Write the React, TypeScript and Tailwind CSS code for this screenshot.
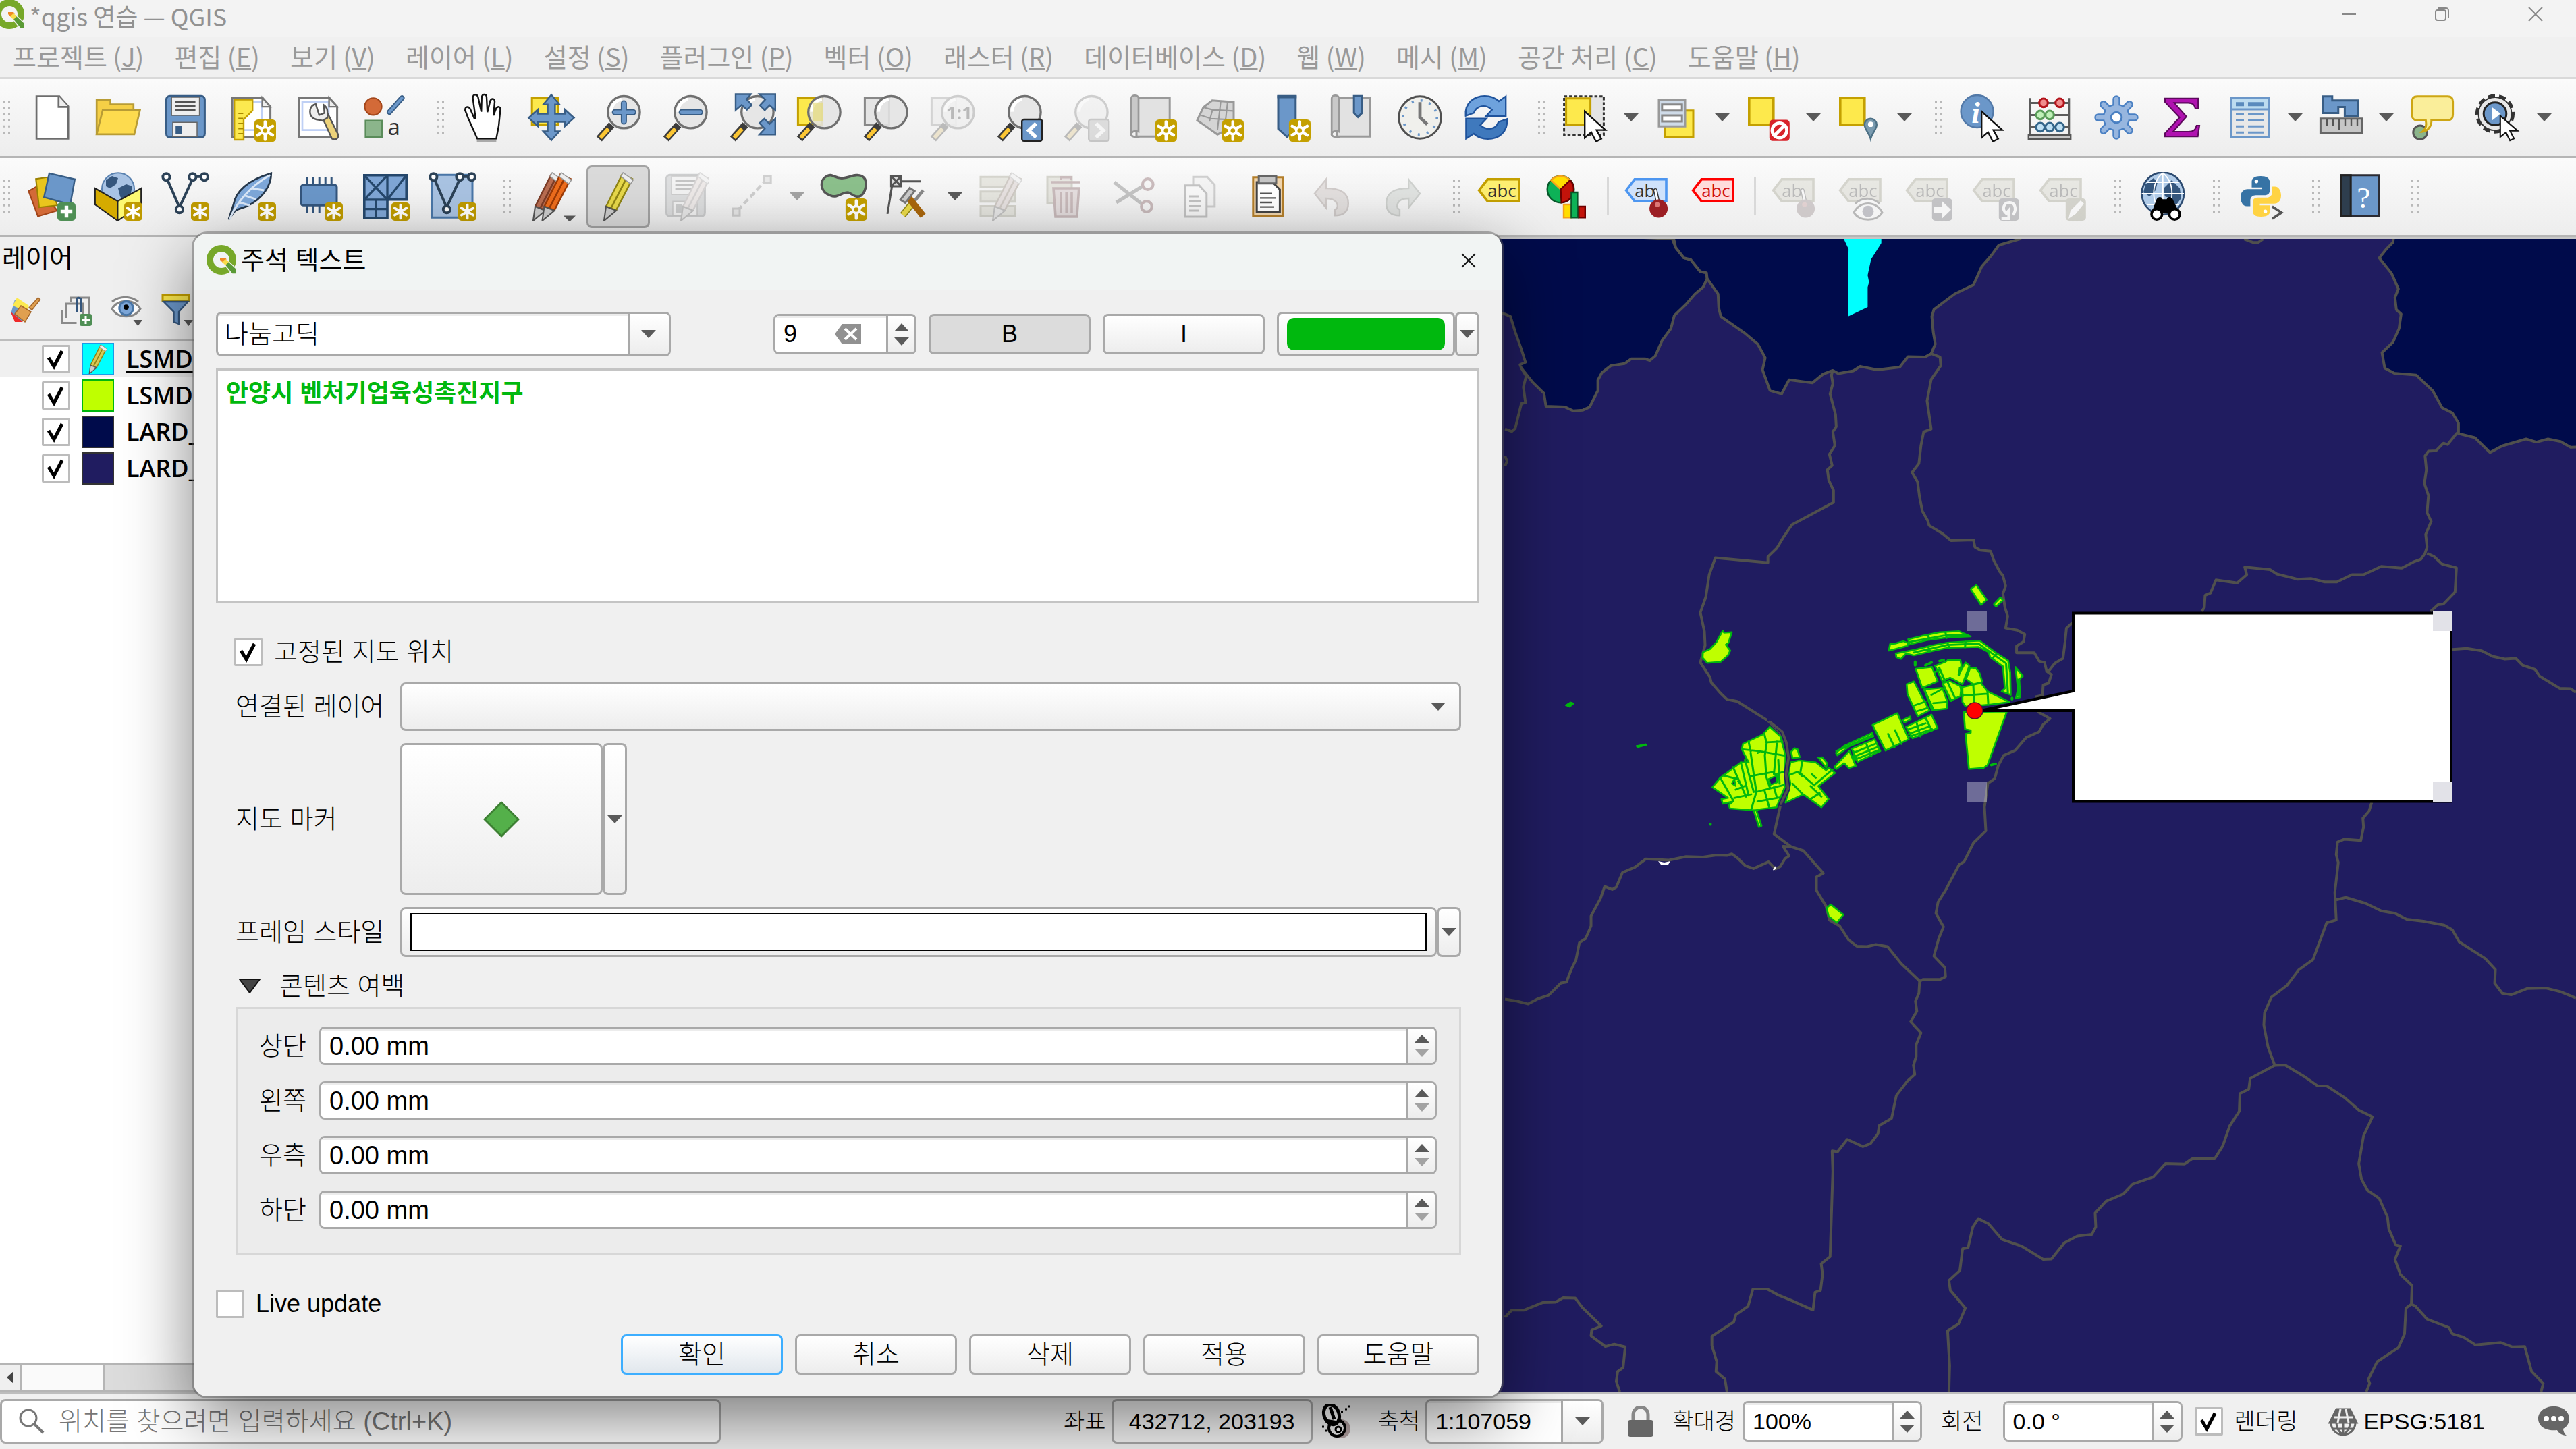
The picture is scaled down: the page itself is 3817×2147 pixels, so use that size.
import type { ReactNode } from "react";
import { clsx } from "clsx";

const control = "rounded-[8px] border-[3px] border-[#a9a9a9]";
const raised = "bg-linear-to-b from-white to-[#ededed]";

/* ---------- icon parts ---------- */

function Icon({ children, faded }: { children: ReactNode; faded?: boolean }) {
  return (
    <svg viewBox="0 0 24 24" className={clsx("size-[72px] shrink-0", faded && "opacity-30 saturate-50")} aria-hidden="true">
      {children}
    </svg>
  );
}

function NewBadge({ small }: { small?: boolean }) {
  if (small) {
    return (
      <g>
        <rect x="15" y="15" width="9" height="9" rx="1.6" fill="#bf9b00" />
        <path d="M19.5 16.2v6.6M16.6 17.8l5.8 3.4M22.4 17.8l-5.8 3.4" stroke="#fff" strokeWidth="1.3" strokeLinecap="round" />
      </g>
    );
  }
  return (
    <g>
      <rect x="13.3" y="13" width="10.7" height="11" rx="1.8" fill="#c4a000" />
      <path d="M18.6 14.2v8.6M14.9 16.3l7.4 4.4M22.3 16.3l-7.4 4.4" stroke="#fff" strokeWidth="1.5" strokeLinecap="round" />
      <circle cx="18.6" cy="18.5" r="2.3" fill="#fff" />
      <circle cx="18.6" cy="18.5" r="1.1" fill="#c4a000" />
    </g>
  );
}

function Lens({ children }: { children?: ReactNode }) {
  return (
    <g>
      <path d="M8.8 15.6 2.6 22.6" stroke="#3c3c3c" strokeWidth="3.6" />
      <path d="M7.2 17.6 3.2 22" stroke="#fcc633" strokeWidth="2" />
      <circle cx="14.8" cy="9.4" r="7.9" fill="#e4e4e4" fillOpacity=".88" stroke="#707070" strokeWidth="1.1" />
      <path d="M8.6 9.2a6 6 0 0 1 5-6.2" stroke="#fff" strokeWidth="1.6" fill="none" />
      {children}
    </g>
  );
}

function Cursor() {
  return <path d="M10.6 8.8v13l3.2-2.7 2.4 4.6 2.6-1.4-2.4-4.3h4.4z" transform="translate(.8 .2)" fill="#fff" stroke="#111" strokeWidth=".8" />;
}

function Tag({ label = "abc", fill = "#fdef72", stroke = "#c4a000", ink = "#333" }) {
  return (
    <g>
      <path d="M1.2 9 5.4 3.6H21v10.8H5.4z" fill={fill} stroke={stroke} strokeWidth="1.2" />
      <text x="5.4" y="12.2" fontSize="8.6" fill={ink} fontFamily="Open Sans, sans-serif">{label}</text>
    </g>
  );
}

function Pin({ color = "#9c1f24" }) {
  return (
    <g>
      <path d="M16.8 14.5 15.6 9" stroke="#333" strokeWidth="2" strokeLinecap="round" />
      <path d="M16.8 14.5 15.6 9" stroke="#fff" strokeWidth="1.1" strokeLinecap="round" />
      <circle cx="17.2" cy="18" r="4.5" fill={color} />
      <circle cx="16.6" cy="16" r="1.2" fill="#d77" />
    </g>
  );
}

function Page() {
  return (
    <g>
      <path d="M2.4 2.2h14.8l4 4.5v14.9H2.4z" fill="#fff" stroke="#777" strokeWidth="1" />
      <path d="M4 4.4h13v13.8H4z" fill="none" stroke="#bfd0f5" strokeWidth=".9" />
      <path d="M17.2 2.2v4.5h4z" fill="#eee" stroke="#777" strokeWidth=".8" />
    </g>
  );
}

function Scroll() {
  return (
    <g>
      <path d="M4 2.4h16.4v19H4z" fill="#e2e2e2" stroke="#999" strokeWidth="1" />
      <path d="M1.4 2.6c0-2 3.6-2 3.6 0V19c-2-.7-3.6 0-3.6 1.5z" fill="#c9c9c9" stroke="#999" strokeWidth=".9" />
      <path d="M1.4 20.3c0 1.5 3.6 1.5 4 1" stroke="#999" fill="none" />
    </g>
  );
}

function Pencil({ color = "#e7d84a", dark = "#8f8415", x = 0 }) {
  return (
    <g transform={`translate(${x} 0)`}>
      <path d="M6 17 14 1l5 2.4-8 15.4z" fill={color} stroke={dark} strokeWidth=".8" />
      <path d="M8.4 18 16.5 2.2" stroke={dark} strokeWidth=".9" />
      <path d="m13.4 2.2 1-1.9 5 3.6-1.3 2z" fill="#eee" stroke="#999" strokeWidth=".5" />
      <path d="m6 17 5 2-6 5z" fill="#ccc" stroke="#555" strokeWidth=".7" />
    </g>
  );
}

function YellowSquare() {
  return <path d="M2.6 2.4h12v13.2h-12z" fill="#fde94c" stroke="#c4a000" strokeWidth="1.2" />;
}

function Floppy({ body = "#6b97c9", edge = "#385d85" }) {
  return (
    <g>
      <rect x="2.8" y="1.4" width="19" height="20.4" rx="1.8" fill={body} stroke={edge} strokeWidth="1" />
      <path d="M5.4 2h13.8v9H5.4z" fill="#eee" stroke="#666" strokeWidth=".5" />
      <path d="M7.2 4.4h10M7.2 6.4h10M7.2 8.4h10" stroke="#555" strokeWidth=".9" />
      <path d="M6 14.4h12v7H6z" fill="#eee" stroke="#666" strokeWidth=".5" />
      <path d="M7.4 16h3v4h-3z" fill={edge} />
    </g>
  );
}

function Polyline() {
  return (
    <g stroke="#2c4257" strokeWidth="1.3" fill="none">
      <path d="M3.4 3.8 9.3 17.4 15.6 3.8M17.6 2.3h3" />
      <circle cx="2.8" cy="2.4" r="1.7" fill="#fff" />
      <circle cx="9.3" cy="18.4" r="1.7" fill="#fff" />
      <circle cx="15.8" cy="2.4" r="1.7" fill="#fff" />
      <circle cx="21.6" cy="2.4" r="1.7" fill="#fff" />
    </g>
  );
}

function Down({ dim }: { dim?: boolean }) {
  return <span className={clsx("block text-center border-x-[11px] border-t-[12px] border-x-transparent", dim ? "border-t-[#a3a3a3]" : "border-t-[#5a5a5a]")} />;
}

function Up() {
  return <span className="block border-x-[11px] border-b-[12px] border-x-transparent border-b-[#5a5a5a]" />;
}

/* ---------- toolbar icons ---------- */

const icons: Record<string, ReactNode> = {
  "New Project": (
    <Icon>
      <path d="M4.7 1.5h11.3l4.4 5v16H4.7z" fill="#fff" stroke="#6d6d6d" strokeWidth=".9" />
      <path d="M15.6 1.5v5.3h4.8" fill="#eee" stroke="#6d6d6d" strokeWidth=".9" />
    </Icon>
  ),
  "Open Project": (
    <Icon>
      <path d="M1.4 20.3V3.4h6.8v2.1h11.4v4" fill="#f5cf46" stroke="#b89c35" strokeWidth=".9" />
      <path d="M1.4 20.3 4.4 8.4h18.4l-2.8 11.9z" fill="#fddb4e" stroke="#b89c35" strokeWidth=".9" />
    </Icon>
  ),
  "Save Project": <Icon><Floppy /></Icon>,
  "New Print Layout": (
    <Icon>
      <Page />
      <path d="M3.4 3.2h9v5.4L8 13v10H3.4z" fill="#fce94f" stroke="#c4a000" strokeWidth=".8" />
      <path d="M5.4 10h2.4M5.4 12.5h2.4M5.4 15h2.4M5.4 17.5h2.4M5.4 20h2.4" stroke="#a88900" strokeWidth=".6" />
      <NewBadge />
    </Icon>
  ),
  "Layout Manager": (
    <Icon>
      <Page />
      <path d="M14.3 13 18.6 22.4c2 1.2 3.6-.4 3-2.2L16.8 10.6z" fill="#ecd27a" stroke="#555" strokeWidth=".8" />
      <path d="M10.6 5.4c-3 .6-3.6 4.4-1.8 6.4 1.6 1.8 3.4 1 5 1.8l2.6-1.4c0-3 .4-5-1.8-6.4l.3 4-2.6 1z" fill="#eee" stroke="#555" strokeWidth=".8" />
    </Icon>
  ),
  "Style Manager": (
    <Icon>
      <circle cx="6" cy="6.6" r="4.2" fill="#d36a38" stroke="#a3461a" strokeWidth=".7" />
      <path d="m14 9.4 6.2-7" stroke="#385d85" strokeWidth="2.6" strokeLinecap="round" />
      <path d="m14 9.4 6.2-7" stroke="#6b97c9" strokeWidth="1.4" strokeLinecap="round" />
      <path d="M2.2 13.6h8.2v8H2.2z" fill="#8bb58b" stroke="#5a8c5a" strokeWidth=".8" />
      <text x="13.2" y="20.6" fontSize="11" fill="#333" fontFamily="Open Sans, sans-serif">a</text>
    </Icon>
  ),
  "Pan Map": (
    <Icon>
      <path d="M8.200 23.400h9.600" stroke="#aaa" strokeWidth="1.600" />
      <path d="M8.400 22.400 4 12.600 2.400 8.400c0-2 1.800-2 2.600-.4l2 4.600h.6L6.200 2.400C6.200.2 8.400.4 8.800 2l1.600 7.200L10.600 2c.4-2 2.400-1.600 2.400 0l.4 7.400 1.400-5.600c.8-1.600 2.400-1 2.200.6L16.400 11l1.400-3.600c1-1.200 2.200-.6 2 .8l-.8 8-1.200 6.200z" fill="#fff" stroke="#111" strokeWidth=".8" />
    </Icon>
  ),
  "Pan Map to Selection": (
    <Icon>
      <path d="M2.400 2.400h13v13.200h-13z" fill="#fde94c" stroke="#c4a000" />
      <path d="m12 .8 4 4.8h-2.2v4.6h4.8V8l4.6 4.2-4.6 4.2v-2.2h-4.8v4.6H16l-4 4.4-4-4.4h2.2v-4.6H5.4v2.2L.8 12.2 5.4 8v2.2h4.8V5.6H8z" fill="#6b97c9" stroke="#385d85" strokeWidth=".8" />
    </Icon>
  ),
  "Zoom In": <Icon><Lens><path d="M14.8 5v9M10.4 9.4h9" stroke="#385d85" strokeWidth="3" strokeLinecap="round" /><path d="M14.8 5v9M10.4 9.4h9" stroke="#6b97c9" strokeWidth="1.8" strokeLinecap="round" /></Lens></Icon>,
  "Zoom Out": <Icon><Lens><path d="M10.4 9.4h9" stroke="#385d85" strokeWidth="3" strokeLinecap="round" /><path d="M10.4 9.4h9" stroke="#6b97c9" strokeWidth="1.8" strokeLinecap="round" /></Lens></Icon>,
  "Zoom Full": (
    <Icon>
      <Lens />
      <path d="M4 .5h7.6L9.4 3l2.6 2.8-2.4 2.4L7 5.8 4 8.4zM23.6.5V8.4L20.8 6l-2.4 2.4L16 6l2.6-2.8L15.8.5zM23.6 20.4h-7.8l2.6-2.8-2.6-2.8 2.4-2.2 2.6 2.6 2.8-2.6z" fill="#6b97c9" stroke="#385d85" strokeWidth=".8" />
    </Icon>
  ),
  "Zoom to Selection": <Icon><path d="M1.8 2.4h12v13.2h-12z" fill="#fde94c" stroke="#c4a000" /><Lens><path d="M9 4.6h5v9.4H9z" fill="#e6dc7c" fillOpacity=".7" /></Lens></Icon>,
  "Zoom to Layer": <Icon><path d="M1.8 2.4h12v13.2h-12z" fill="#e4e4e4" stroke="#888" /><Lens /></Icon>,
  "Zoom to Native Resolution": <Icon faded><path d="M1.8 2.4h12v13.2h-12z" fill="#e4e4e4" stroke="#888" /><Lens><text x="9" y="13" fontSize="9" fontWeight="bold" fill="#333" fontFamily="Open Sans, sans-serif">1:1</text></Lens></Icon>,
  "Zoom Last": <Icon><Lens /><rect x="13.4" y="13" width="10" height="10.6" rx="1" fill="#6b97c9" stroke="#222" strokeWidth=".8" /><path d="m20.4 15-3.6 3.4 3.6 3.4" stroke="#fff" strokeWidth="1.8" fill="none" /></Icon>,
  "Zoom Next": <Icon faded><Lens /><rect x="13.4" y="13" width="10" height="10.6" rx="1" fill="#aaa" stroke="#666" strokeWidth=".8" /><path d="m17 15 3.6 3.4-3.6 3.4" stroke="#fff" strokeWidth="1.8" fill="none" /></Icon>,
  "New Map View": <Icon><Scroll /><NewBadge /></Icon>,
  "New 3D Map View": (
    <Icon>
      <path d="m1 13.4 3-6.400 4.400-3.400 10.600.8v12l-8 4z" fill="#d5d5d5" stroke="#999" />
      <path d="m4 7 4.600 1.200 10.400.6M3 11l4.800 1.600 11 .6M8.600 8 7 14M12.600 4l-1.600 14M16 4.200l-1 9" stroke="#999" strokeWidth=".7" fill="none" />
      <NewBadge />
    </Icon>
  ),
  "New Spatial Bookmark": <Icon><path d="M8 1.4h8.600v16l-4.200 4.200-4.400-4z" fill="#6b97c9" stroke="#385d85" /><path d="M7.500 1.800h9.600" stroke="#385d85" strokeWidth="1.4" /><NewBadge /></Icon>,
  "Show Spatial Bookmarks": <Icon><Scroll /><path d="M12.4 1.4h4v8.4l-2 2-2-2z" fill="#6b97c9" stroke="#385d85" /></Icon>,
  "Temporal Controller": (
    <Icon>
      <circle cx="12" cy="12" r="10.4" fill="#f0f0ec" stroke="#505050" strokeWidth="1" />
      <circle cx="12" cy="12" r="8.4" fill="none" stroke="#6b97c9" strokeWidth="1.2" strokeDasharray="1 3.4" />
      <path d="M12 4.4V12l3.6 3.4" stroke="#777" strokeWidth="1.6" fill="none" />
    </Icon>
  ),
  Refresh: (
    <Icon>
      <path d="M1.6 11.2C1 4.6 6 1.4 11 1.4c3 0 5 .8 7 2.6l3.4-2.4v9.8h-9.8l3-3.2c-3-2.8-7.6-2.4-9 1.6z" fill="#6ea2dd" stroke="#1f539c" strokeWidth=".8" />
      <path d="M22 12.8c.6 6.6-4.4 9.8-9.4 9.8-3 0-5-.8-7-2.6l-3.8 2.4v-9.8h10l-3 3.2c3 2.8 7.6 2.4 9-1.6z" fill="#3f79bd" stroke="#1f539c" strokeWidth=".8" />
    </Icon>
  ),
  "Select Features": <Icon><path d="M1.2 1.6h19.6v19H1.2z" fill="#e4e4e4" stroke="#333" strokeDasharray="1.5 1" /><path d="M2.2 2.6h12v13h-12z" fill="#fde94c" stroke="#c4a000" /><Cursor /></Icon>,
  "Select by Value": (
    <Icon>
      <path d="M6 8.6h14v13H6z" fill="#fde94c" stroke="#c4a000" />
      <path d="M3 3.4h13v13H3z" fill="#cfdbe8" stroke="#999" />
      <path d="M4.6 5.6h9.8v3H4.6zM4.6 11h9.8v3H4.6z" fill="#fff" stroke="#888" />
    </Icon>
  ),
  "Deselect Features": <Icon><YellowSquare /><rect x="12.6" y="13.2" width="10" height="10.4" rx="1.6" fill="#d8232a" /><circle cx="17.6" cy="18.4" r="3.6" fill="none" stroke="#fff" strokeWidth="1.6" /><path d="m15 21 5.2-5.2" stroke="#fff" strokeWidth="1.6" /></Icon>,
  "Select by Location": <Icon><YellowSquare /><path d="M17.6 22.6c-1-3.6-3-4.6-3-7a3 3 0 0 1 6 0c0 2.4-2 3.4-3 7z" fill="#7a9bb0" stroke="#4d7085" strokeWidth=".8" /><circle cx="17.6" cy="15.4" r="1.3" fill="#fff" /></Icon>,
  "Identify Features": (
    <Icon>
      <circle cx="9.2" cy="9" r="8" fill="#6b97c9" stroke="#5279a8" strokeWidth=".8" />
      <text x="6.4" y="14.6" fontSize="15" fontStyle="italic" fontWeight="bold" fill="#fff" fontFamily="Liberation Serif, serif">i</text>
      <Cursor />
    </Icon>
  ),
  "Field Calculator": (
    <Icon>
      <path d="M2.4 2.4v19M21.6 2.4v19M2.4 4.8h19.2M2.4 10.8h19.2M2.4 16.8h19.2" stroke="#5c5c5c" />
      <path d="M1.6 20.6h20.8v2H1.6z" fill="#c6c6c6" stroke="#555" strokeWidth=".8" />
      <g fill="#f08d8d" stroke="#b3131b"><circle cx="9" cy="4.8" r="2.1" /><circle cx="17" cy="4.8" r="2.1" /></g>
      <g fill="#c0f0b8" stroke="#5a9c5a"><circle cx="7.4" cy="10.8" r="2.1" /><circle cx="12" cy="10.8" r="2.1" /></g>
      <g fill="#bfe0f4" stroke="#33658a"><circle cx="7.4" cy="16.8" r="2.1" /><circle cx="12" cy="16.8" r="2.1" /><circle cx="17" cy="16.8" r="2.1" /></g>
    </Icon>
  ),
  "Processing Toolbox": (
    <Icon>
      <g stroke="#4a80c3" strokeWidth="3.800" strokeLinecap="round"><path d="M12 3v18M3 12h18M5.6 5.6l12.8 12.8M18.4 5.6 5.6 18.4" /></g>
      <circle cx="12" cy="12" r="6.800" fill="#4a80c3" />
      <g stroke="#97b6df" strokeWidth="2.200" strokeLinecap="round"><path d="M12 3v18M3 12h18M5.6 5.6l12.8 12.8M18.4 5.6 5.6 18.4" /></g>
      <circle cx="12" cy="12" r="6" fill="#97b6df" />
      <circle cx="12" cy="12" r="2.6" fill="#fff" stroke="#4a80c3" />
    </Icon>
  ),
  "Statistical Summary": <Icon><path d="M3 2.6h16.4v5h-1.4c-.4-2.2-1.6-2.8-3.6-2.8H7.6l6 6.8-6.6 7.4h7.6c2.4 0 3.4-.8 4-3h1.4l-.8 5.4H3v-1.6l7.2-7.8L3 4.4z" fill="#b012b0" stroke="#5c0a5c" strokeWidth=".7" /></Icon>,
  "Attribute Table": (
    <Icon>
      <path d="M2.6 2.4h18.8v19.2H2.6z" fill="#e8e8e8" stroke="#6b97c9" />
      <path d="M3 3h18v5H3z" fill="#bcdcf0" />
      <path d="M2.6 8h18.8" stroke="#6b97c9" />
      <path d="M5 5.4h4M11 5.4h8" stroke="#5a8bbd" strokeWidth="2" />
      <path d="M5 10.4h4M11 10.4h8M5 13.4h4M11 13.4h8M5 16.4h4M11 16.4h8M5 19.4h4M11 19.4h8" stroke="#6b97c9" />
    </Icon>
  ),
  "Measure Line": (
    <Icon>
      <path d="M3 1.6h4.6v2h12.8v7.8h-6.6V6.8h-3.2v3H3z" fill="#6b97c9" stroke="#385d85" />
      <path d="M1.8 12.6h20.4v7H1.8z" fill="#c6c6c6" stroke="#666" />
      <path d="M5 13v3M8 13v3M11 13v5M14 13v3M17 13v3M20 13v3" stroke="#555" strokeWidth=".8" />
    </Icon>
  ),
  "Show Map Tips": (
    <Icon>
      <circle cx="6" cy="19.4" r="3.4" fill="#8bb58b" stroke="#555" />
      <path d="M4.6 1.6h15c2 0 2.6 1 2.6 2.6v6.4c0 2-1 2.8-2.6 2.8h-8c.2 3-2 5.4-4.4 5.6 1.8-1.4 2-3.6 1.6-5.6H4.6c-2 0-2.6-1-2.6-2.8V4.2c0-1.8.8-2.6 2.6-2.6z" fill="#faee9a" stroke="#cda614" />
    </Icon>
  ),
  "Run Feature Action": (
    <Icon>
      <circle cx="10" cy="10.2" r="8.8" fill="none" stroke="#333" strokeWidth="1.800" strokeDasharray="3.4 2" />
      <circle cx="10" cy="10.2" r="8.2" fill="#e8e8e8" stroke="#333" strokeWidth=".6" />
      <circle cx="10" cy="10.2" r="5.6" fill="#6b97c9" stroke="#222" />
      <path d="m8.6 7 4.2 3.2-4.2 3.2z" fill="#fff" />
      <path d="M12.600 11.200v10.400l2.800-2.200 2 4 2-1-2-3.800h3.800z" fill="#fff" stroke="#111" strokeWidth=".7" />
    </Icon>
  ),

  "Data Source Manager": (
    <Icon>
      <path d="M.8 9.4 5 7l10 12-9.6 2.8z" fill="#d36a38" stroke="#a3461a" strokeWidth=".7" />
      <path d="M4.4 3.4 10 2.6l5 13.8-9 1z" fill="#e9c51d" stroke="#9a8000" strokeWidth=".7" />
      <path d="m11 .6 12.6 3L21.4 16 8.4 12.4z" fill="#6b97c9" stroke="#385d85" strokeWidth=".8" />
      <rect x="15" y="15" width="9" height="9" rx="1.6" fill="#4f8f55" />
      <path d="M19.5 16.6v5.8M16.6 19.5h5.8" stroke="#fff" strokeWidth="1.8" />
    </Icon>
  ),
  "New GeoPackage Layer": (
    <Icon>
      <circle cx="12" cy="8.4" r="8" fill="#a8c3e4" stroke="#5a82b0" strokeWidth=".7" />
      <path d="m6 4 3-2 3 1-1 3-3 2-2-1zM12 8l4-2 3 1-1 5-3 3-2-3z" fill="#34567d" />
      <path d="m.6 8 11.2 6.4V24L.6 16z" fill="#d5ab00" stroke="#222" strokeWidth=".7" />
      <path d="m23.4 8-11.6 6.4V24l11.6-8z" fill="#fdf972" stroke="#222" strokeWidth=".7" />
      <NewBadge small />
    </Icon>
  ),
  "New Shapefile Layer": <Icon><Polyline /><NewBadge small /></Icon>,
  "New SpatiaLite Layer": (
    <Icon>
      <path d="M.6 23.400 3 16C4 9.600 10 4 21.600.6c0 6-4 12.400-11.800 16.200l-5.800 2z" fill="#7ea8da" stroke="#26384c" strokeWidth=".9" />
      <path d="M1 23.4C5 14 12 6.600 21 1.500M8 11.400l6 2M12 8l6 1M6 15l5 1.400" stroke="#dbe8f8" strokeWidth="1" fill="none" />
      <NewBadge small />
    </Icon>
  ),
  "New Temporary Scratch Layer": (
    <Icon>
      <path d="M6.400 2.400v4M9.400 2.400v4M12.400 2.400v4M15.400 2.400v4M18.400 2.400v4M6.400 16v4M9.400 16v4M12.400 16v4" stroke="#34567d" />
      <rect x="3.400" y="6.400" width="17.600" height="10" rx="1" fill="#6b97c9" stroke="#34567d" />
      <NewBadge small />
    </Icon>
  ),
  "New Mesh Layer": (
    <Icon>
      <path d="M1.600 1.600h20.800v12H13v9H1.600z" fill="#7fa6d6" stroke="#26486c" strokeWidth="1.200" />
      <path d="M13 1.600v12H1.600M1.600 1.600 13 13.600M13 1.600 1.600 13.600M13 13.600 22.400 1.600M7.300 13.600v9M1.600 18.200H13" stroke="#26486c" strokeWidth="1.100" fill="none" />
      <NewBadge small />
    </Icon>
  ),
  "New Virtual Layer": <Icon><path d="M2 1.400h20v21H2z" fill="#a9c3e2" stroke="#4a77a8" /><Polyline /><NewBadge small /></Icon>,
  "Current Edits": (
    <Icon>
      <Pencil color="#b96d51" dark="#7c3d28" x={-2} />
      <Pencil color="#ee6d1d" dark="#9c3a06" x={2.5} />
      <path d="M18 21.500h6l-3 3z" fill="#5a5a5a" />
    </Icon>
  ),
  "Toggle Editing": <Icon><Pencil /></Icon>,
  "Save Layer Edits": <Icon faded><Floppy body="#a5abb2" edge="#6c7278" /><Pencil color="#e9cdc6" dark="#988" x={5} /></Icon>,
  "Digitize with Segment": <Icon faded><path d="M5 19 19 4" stroke="#777" strokeWidth="1.400" strokeDasharray="3 1.600" /><path d="M2.600 18h3.400v3.400H2.600zM18 2h3.400v3.400H18z" fill="#ccc" stroke="#777" /></Icon>,
  "Add Polygon Feature": <Icon><path d="M4 2c3-1.600 4 1.400 8 1s6-2.400 9.400-1c3 1.600 2.400 7-.4 9.600-3 1.400-4-.8-6.600-1.600-3 0-5 3-8.400 1.600C.6 10 .2 4 4 2z" fill="#8cc08c" stroke="#555" strokeWidth="1.200" /><NewBadge /></Icon>,
  "Vertex Tool": (
    <Icon>
      <path d="M3.600 4.600 1 20.600M8 4.600h9.600" stroke="#555" strokeWidth="1" />
      <path d="M2.800 2h5v5h-5zM2.800 2l5 5M7.800 2l-5 5" fill="#ddd" stroke="#555" />
      <path d="M18.600 9 9 21" stroke="#888" strokeWidth="1.600" />
      <path d="M13.600 15 8.600 21.200" stroke="#8f8415" strokeWidth="3.400" />
      <path d="M13.600 15 8.600 21.200" stroke="#eadb4a" strokeWidth="2.400" />
      <path d="m11 12 7.600 9.600" stroke="#a9660c" strokeWidth="3.200" />
      <path d="m7.400 13.600 4.600-5.800 2.400 1.600-4.600 5.800z" fill="#ccc" stroke="#777" />
    </Icon>
  ),
  "Modify Attributes": <Icon faded><path d="M2 2.400h17v5H2zM2 9.600h17v5H2zM2 16.800h17v5H2z" fill="#c7c5a0" stroke="#8c8a5a" /><Pencil color="#d8b4ae" dark="#864" x={3} /></Icon>,
  "Delete Selected": <Icon faded><path d="M2 2.400h12v13H2z" fill="#c7c5a0" stroke="#8c8a5a" /><path d="M4 5h14M8.600 4V2.600h5V4M5 8h12.600l-1 14H6zM8.600 10v10M11.400 10v10M14 10v10" fill="#d5a7ab" stroke="#8c2d35" strokeWidth="1.200" /></Icon>,
  "Cut Features": <Icon faded><path d="m2 5 14 11M3 15 16 7" stroke="#555" strokeWidth="1.800" /><circle cx="18.600" cy="6" r="2.600" fill="none" stroke="#8c2d35" strokeWidth="1.400" /><circle cx="18" cy="17" r="2.600" fill="none" stroke="#8c2d35" strokeWidth="1.400" /></Icon>,
  "Copy Features": <Icon faded><path d="M8 2.400h7l3.600 4V17H8z" fill="#eee" stroke="#777" /><path d="M4 6.600h7l3.600 4V22H4z" fill="#fff" stroke="#555" /><path d="M6 12h5M6 14.400h6M6 16.800h6M6 19h5" stroke="#555" /></Icon>,
  "Paste Features": (
    <Icon>
      <path d="M4.600 2.600h14.800v19H4.600z" fill="#f0d5ae" stroke="#b47f2b" />
      <path d="M6.400 5h7.800l3.600 3.600v11H6.400z" fill="#fff" stroke="#444" />
      <path d="M8 10.600h6M8 12.800h8M8 15h6M8 17.200h7" stroke="#555" strokeWidth=".8" />
      <path d="M7.400 2.200h8.600v3.400H7.400z" fill="#c6c6c6" stroke="#666" />
    </Icon>
  ),
  Undo: <Icon faded><path d="m2 10.600 5.600-7V8c7 0 11 2 11 7.400 0 4-2.400 6-6.600 6v-3c2 0 2.400-5.400-4.400-5.400v4.600z" fill="#c4aea6" stroke="#8a6a60" strokeWidth=".8" /></Icon>,
  Redo: <Icon faded><path d="m21 10.600-5.600-7V8c-7 0-11 2-11 7.400 0 4 2.400 6 6.600 6v-3c-2 0-2.400-5.400 4.400-5.400v4.600z" fill="#aebcb0" stroke="#71806f" strokeWidth=".8" /></Icon>,
  "Layer Labeling Options": <Icon><Tag /></Icon>,
  "Layer Diagram Options": (
    <Icon>
      <circle cx="8.500" cy="8.500" r="6.600" fill="#0db257" stroke="#07592b" strokeWidth=".8" />
      <path d="M8.500 8.500 3.700 4a6.600 6.600 0 0 1 9.500 0z" fill="#fd0" stroke="#f5a21c" strokeWidth=".8" />
      <path d="M8.500 8.500 13.200 4a6.600 6.600 0 0 1-4.300 11.100z" fill="#c3130a" stroke="#6d0000" strokeWidth=".8" />
      <path d="M10 16h3.600v6.400H10z" fill="#fd0" stroke="#f5a21c" strokeWidth=".8" />
      <path d="M17.400 17h3.200v5.400h-3.200z" fill="#c3130a" stroke="#6d0000" strokeWidth=".8" />
      <path d="M13.800 10h3v12.400h-3z" fill="#0db257" stroke="#07592b" strokeWidth=".8" />
    </Icon>
  ),
  "Highlight Pinned Labels": <Icon><Tag label="ab" fill="#cfe2fb" stroke="#4d96f0" /><Pin /></Icon>,
  "Toggle Unplaced Labels": <Icon><Tag fill="#ffdcdc" stroke="#f00" ink="#d01010" /></Icon>,
  "Pin Labels": <Icon faded><Tag label="ab" fill="#c9c7a6" stroke="#8c8a5a" /><Pin color="#8c6a6e" /></Icon>,
  "Show Hidden Labels": <Icon faded><Tag fill="#c9c7a6" stroke="#8c8a5a" /><path d="M8 20c3-6 11-6 14 0-3 4.600-11 4.600-14 0zM8.600 15.600c4-3.600 9-3 12 0" fill="#fff" stroke="#333" /><circle cx="15" cy="19.400" r="2.800" fill="#557" /></Icon>,
  "Move Label": <Icon faded><Tag fill="#c9c7a6" stroke="#8c8a5a" /><rect x="13.600" y="13" width="10" height="11" rx="1.600" fill="#556" /><path d="M14.600 17h4v-2.600l4.400 4.200-4.400 4.200v-2.600h-4z" fill="#fff" /></Icon>,
  "Rotate Label": <Icon faded><Tag fill="#c9c7a6" stroke="#8c8a5a" /><rect x="13.600" y="13" width="10" height="11" rx="1.600" fill="#556" /><path d="M20.500 21c2-2 1.400-6-1.600-6s-4 3.400-1.600 5.400l1.200-1.400v4h-3.600" fill="none" stroke="#fff" strokeWidth="1.400" /></Icon>,
  "Change Label Properties": <Icon faded><Tag fill="#c9c7a6" stroke="#8c8a5a" /><rect x="13.600" y="13" width="10" height="11" rx="1.600" fill="#8c8a5a" /><path d="m15 23 1-4 5-5 1.600 1.600-4 5z" fill="#fff" /></Icon>,
  "Metasearch": (
    <Icon>
      <circle cx="12.600" cy="10.600" r="10.400" fill="#b0cbe8" stroke="#2c4a70" strokeWidth=".9" />
      <path d="m4 6 4-3 2 2-1 4-3 3-3-2zM13 8l4-4 4 4 .6 5-3 4-2-4-3-1z" fill="#34567d" />
      <path d="M12.600.4v20M2.200 10.600H23M4.600 5h16M4.600 16h16M12.600.4c-6 5-6 15 0 20M12.600.4c6 5 6 15 0 20" stroke="#fff" strokeWidth=".6" fill="none" />
      <path d="M9.500 13.400c1-1.400 2.400-1.400 3 0h2c.6-1.400 2-1.400 3 0l3.400 7h-14z" />
      <circle cx="9.600" cy="20.800" r="2.600" fill="#fff" stroke="#000" strokeWidth="1.200" />
      <circle cx="18.400" cy="20.800" r="2.600" fill="#fff" stroke="#000" strokeWidth="1.200" />
    </Icon>
  ),
  "Python Console": (
    <Icon>
      <path d="M12 2c-4 0-4.500 1.600-4.500 3v2.600h5v.8H5.500C3.400 8.400 2 10 2 12.400s1.200 4.400 3 4.400h1.800V14c0-1.600 1.200-2.600 2.800-2.600h4.600c1.300 0 2.200-1 2.200-2.300V5c0-2-1.600-3-4.400-3z" fill="#3673a5" />
      <path d="M12 22c4 0 4.500-1.600 4.500-3v-2.600h-5v-.8h7C20.600 15.600 22 14 22 11.600s-1.200-4.400-3-4.400h-1.400V10c0 1.600-1.200 2.600-2.800 2.600h-4.600c-1.300 0-2.200 1-2.200 2.300V19c0 2 1.200 3 4 3z" fill="#ffd343" />
      <circle cx="9.800" cy="4.600" r=".9" fill="#fff" />
      <circle cx="14.200" cy="19.400" r=".9" fill="#fff" />
      <path d="m17.600 17 4.600 3-4.600 3" stroke="#555" strokeWidth="1.200" fill="none" />
    </Icon>
  ),
  Help: (
    <Icon>
      <path d="M2.600 1.600h18.800v20H2.600z" fill="#6b97c9" stroke="#2b2b33" />
      <path d="M2.600 1.600h4.800v20H2.600z" fill="#2e3e4e" stroke="#222" />
      <text x="10.400" y="17.600" fontSize="15" fill="#fff" fontFamily="Liberation Serif, serif">?</text>
    </Icon>
  ),
};

/* ---------- toolbars ---------- */

function Handle({ first }: { first?: boolean }) {
  return (
    <div className={clsx("shrink-0 flex items-center", first ? "w-[26px] pl-[3px]" : "w-12 pl-[26px]")}>
      <svg viewBox="0 0 14 50" className="w-3.5 h-[50px]" aria-hidden="true">
        <path d="M2.500 0v50M10.500 0v50" stroke="#b9b9b9" strokeWidth="3" strokeDasharray="3 6.200" />
      </svg>
    </div>
  );
}

function Tool({ name, menu, dim, pressed }: { name: string; menu?: boolean; dim?: boolean; pressed?: boolean }) {
  return (
    <div className="flex items-center shrink-0">
      <button type="button" aria-label={name} disabled={dim} className="w-[99px] flex justify-center items-center">
        {pressed ? (
          <span className="w-[94px] h-[93px] rounded-[8px] border-[3px] border-[#a3a3a3] bg-[#dadada] flex justify-center items-center">{icons[name]}</span>
        ) : (
          icons[name]
        )}
      </button>
      {menu && (
        <button type="button" aria-label={`${name} menu`} className="w-9 flex justify-center">
          <Down dim={dim} />
        </button>
      )}
    </div>
  );
}

const Divider = () => <div className="w-5 flex justify-center shrink-0"><div className="w-[3px] h-14 bg-[#d9d9d9]" /></div>;

const toolbarClass = "flex items-center h-[117px] border-b-[3px] border-[#b5b5b5] bg-linear-to-b from-[#fbfbfb] to-[#ededed] overflow-hidden";

function ProjectToolbar() {
  return (
    <div className={toolbarClass} role="toolbar" aria-label="Project">
      <Handle first />
      {["New Project", "Open Project", "Save Project", "New Print Layout", "Layout Manager", "Style Manager"].map((n) => <Tool key={n} name={n} />)}
      <Handle />
      {["Pan Map", "Pan Map to Selection", "Zoom In", "Zoom Out", "Zoom Full", "Zoom to Selection", "Zoom to Layer", "Zoom to Native Resolution", "Zoom Last", "Zoom Next", "New Map View", "New 3D Map View", "New Spatial Bookmark", "Show Spatial Bookmarks", "Temporal Controller", "Refresh"].map((n) => <Tool key={n} name={n} />)}
      <Handle />
      {["Select Features", "Select by Value", "Deselect Features", "Select by Location"].map((n) => <Tool key={n} name={n} menu />)}
      <Handle />
      {["Identify Features", "Field Calculator", "Processing Toolbox", "Statistical Summary"].map((n) => <Tool key={n} name={n} />)}
      <Tool name="Attribute Table" menu />
      <Tool name="Measure Line" menu />
      <Tool name="Show Map Tips" />
      <Tool name="Run Feature Action" menu />
    </div>
  );
}

function LayerToolbar() {
  return (
    <div className={toolbarClass} role="toolbar" aria-label="Layers">
      <Handle first />
      {["Data Source Manager", "New GeoPackage Layer", "New Shapefile Layer", "New SpatiaLite Layer", "New Temporary Scratch Layer", "New Mesh Layer", "New Virtual Layer"].map((n) => <Tool key={n} name={n} />)}
      <Handle />
      <Tool name="Current Edits" />
      <Tool name="Toggle Editing" pressed />
      <Tool name="Save Layer Edits" />
      <Tool name="Digitize with Segment" menu dim />
      <Tool name="Add Polygon Feature" />
      <Tool name="Vertex Tool" menu />
      {["Modify Attributes", "Delete Selected", "Cut Features", "Copy Features", "Paste Features", "Undo", "Redo"].map((n) => <Tool key={n} name={n} />)}
      <Handle />
      <Tool name="Layer Labeling Options" />
      <Tool name="Layer Diagram Options" />
      <Divider />
      <Tool name="Highlight Pinned Labels" />
      <Tool name="Toggle Unplaced Labels" />
      <Divider />
      {["Pin Labels", "Show Hidden Labels", "Move Label", "Rotate Label", "Change Label Properties"].map((n) => <Tool key={n} name={n} />)}
      <Handle />
      <Tool name="Metasearch" />
      <Handle />
      <Tool name="Python Console" />
      <Handle />
      <Tool name="Help" />
      <Handle />
    </div>
  );
}

/* ---------- shared controls ---------- */

function QgisLogo() {
  return (
    <svg viewBox="0 0 46 46" className="size-[46px] shrink-0" aria-hidden="true">
      <circle cx="22" cy="22" r="17" fill="none" stroke="#77a829" strokeWidth="10" />
      <path d="M20 19h8l3 4-5 5-6-6z" fill="#f08a24" />
      <path d="m25 27 5-5 14 13v8h-6z" fill="#5a9a35" stroke="#f2f2f2" strokeWidth="1.500" />
      <path d="m23 25 5-4 5 4-5 5z" fill="#f9dc4b" />
    </svg>
  );
}

function Check({ label, checked, id, bare }: { label: string; checked?: boolean; id: string; bare?: boolean }) {
  return (
    <div className="flex items-center gap-[17px] shrink-0">
      <span className="relative size-[42px] shrink-0">
        <input id={id} type="checkbox" defaultChecked={checked} aria-label={bare ? label : undefined} className="peer appearance-none block size-[42px] bg-white border-[3px] border-[#bcbcbc] rounded-[2px]" />
        <svg viewBox="0 0 42 42" className="absolute inset-0 hidden peer-checked:block pointer-events-none" aria-hidden="true">
          <path d="m10 19 8 13L30 9" fill="none" stroke="#000" strokeWidth="5" />
        </svg>
      </span>
      {!bare && <label htmlFor={id}>{label}</label>}
    </div>
  );
}

function Spin({ label, value, id, className, atMin, clear }: { label: string; value: string; id: string; className: string; atMin?: boolean; clear?: boolean }) {
  return (
    <div className={clsx("flex items-stretch bg-white overflow-hidden", control, className)}>
      <input id={id} aria-label={label} defaultValue={value} className="flex-1 min-w-0 pl-3 bg-white shadow-[inset_0_3px_0_#ececec]" />
      {clear && (
        <button type="button" aria-label="Clear" className="w-[76px] flex items-center shadow-[inset_0_3px_0_#ececec]">
          <svg viewBox="0 0 40 30" className="w-10 h-[30px]"><path d="M0 15 11 0h28v30H11z" fill="#919191" /><path d="m15 7 17 16M32 7 15 23" stroke="#fff" strokeWidth="4" /></svg>
        </button>
      )}
      <div className={clsx("w-[42px] shrink-0 border-l-[3px] border-[#a9a9a9] flex flex-col justify-center items-center gap-[9px]", raised)}>
        <button type="button" aria-label={`${label} +`}><Up /></button>
        <button type="button" aria-label={`${label} −`}><Down dim={atMin} /></button>
      </div>
    </div>
  );
}

/* ---------- map ---------- */

const borders9 = [
  "M480 392 478 405 480 430 476 460 484 520 485 555 480 570 483 610 475 635 479 668 472 680 474 710 481 740 481 775 420 840 407 878 398 908 385 933 385 950 308 936 299 985 294 1050 286 1095 292 1150 293 1190 286 1240 300 1282 302 1298 316 1330 325 1347 340 1353 385 1409 403 1443 412 1485 415 1530 412 1570",
  "M624 343 637 353 638 378 624 418 618 480 624 562 613 570 609 610 606 662 596 688 604 715 607 760 611 800 619 828 621 842 640 865 653 886 686 884 688 905 696 914 711 917 716 945 724 975 729 988 733 1018 729 1040 732 1080 736 1105 733 1140 750 1146 761 1158 759 1180 749 1192 749 1212 775 1212 782 1236 790 1240 793 1265 800 1275 796 1300 788 1305 787 1335 776 1340",
  "M832 1122 822 1140 820 1180 817 1228 805 1242 794 1270",
  "M780 1383 798 1403 788 1420 782 1441 763 1458 747 1495 730 1510 722 1540 718 1570",
  "M1394 573 1380 607 1374 603 1363 625 1352 626 1347 640 1349 680 1346 720 1352 755 1350 805 1356 830 1348 868 1350 905 1347 923 1341 940 1330 948 1313 966 1283 961 1257 985 1240 985 1218 1006 1200 1006 1180 996 1160 998 1130 983 1120 970 1083 963 1086 985 1072 1009 1041 1000 1033 1038 1025 1045 1024 1080 1020 1092",
  "M1350 923 1360 932 1372 954 1393 965 1391 1035 1374 1070 1366 1072 1355 1092",
  "M1387 1202 1408 1199 1430 1206 1446 1222 1464 1230 1480 1228 1490 1248 1508 1260 1515 1280 1544 1315 1560 1316 1568 1327",
  "M24 385 31 408 27 440 30 485 24 488 15 560 10 569 0 562",
  "M0 640 3 655 0 670M1082 10 1095 20 1103 20 1110 10",
];

const borders11 = [
  "M718 0 717 8 707 20 702 80 704 140 686 170 672 218 665 225 645 290 634 320 631 348 642 382 635 412 628 456 644 485 645 508 637 515 612 515 607 520 606 550 601 570 603 595 594 622 609 650 602 680 602 710 598 732 600 755 589 772 573 808 566 866 548 884 546 905 535 930 524 937 501 919 487 950 479 948 480 1000 476 1215 463 1233 465 1260 462 1300 454 1305 451 1350 420 1326 400 1312 384 1297 363 1297 356 1340 338 1362 335 1380 303 1416 303 1440 310 1480 309 1505 322 1524 325 1556",
  "M413 0 415 30 404 70 394 148 419 180 437 190 466 247 456 256 456 290 470 330 475 365 490 380 503 415 515 431 530 432 543 427 560 432 580 475 607 519",
  "M419 180 407 179 416 203 410 210 403 230 396 236 386 218 364 235 352 228 340 208 332 198 325 202 310 201 290 206 265 205 240 214 206 211 190 232 172 245 163 282 157 288 146 280 140 310 126 355 126 380 118 412 109 422 104 465 97 490 90 522 82 524 64 555 48 564 34 577 18 570 0 565",
  "M1269 68 1265 90 1256 108 1257 130 1253 164 1229 161 1219 168 1217 200 1220 220 1215 295 1217 365 1203 372 1183 465 1162 491 1145 530 1122 560 1112 600 1111 630 1117 685 1127 732 1091 765 1089 792 1076 803 1075 848 1061 885 1051 935 1039 968 1006 968 995 981 967 980 949 1014 919 1032 905 1057 880 1075 864 1105 865 1140 859 1159 838 1163 819 1180 800 1221 788 1222 757 1189 728 1172 708 1132 693 1119 685 1140 678 1192 670 1195 666 1250 650 1275 652 1300 674 1345 664 1385 648 1402 651 1490 650 1556",
  "M1217 314 1231 308 1260 323 1283 342 1303 348 1320 363 1345 368 1375 378 1387 390 1397 420 1435 462 1450 490 1449 525 1460 550 1473 554 1497 538 1524 537 1545 546 1568 562",
  "M1127 732 1142 731 1170 760 1190 784 1203 784 1229 813 1250 845 1270 862 1257 910 1250 980 1254 1020 1263 1048 1280 1068 1292 1115 1294 1145 1304 1185 1311 1188 1303 1222 1311 1260 1328 1288 1327 1335 1319 1345 1317 1410 1308 1445 1277 1480 1264 1525 1266 1535 1261 1556",
  "M1327 1335 1333 1340 1350 1373 1382 1394 1387 1410 1403 1418 1421 1438 1458 1432 1475 1443 1493 1442 1503 1505 1520 1535 1517 1556",
  "M0 1368 10 1350 28 1350 55 1331 74 1330 85 1319 103 1320 113 1343 141 1390 127 1400 126 1415 147 1442 160 1436 176 1443 173 1495 165 1505 163 1530 168 1556",
];

// parcels of the venture district
const parcels = [
  "M190 243 195 252 225 250 212 295 202 303 219 328 210 348 182 375 130 380 112 358 113 335 140 322 165 293z",
  "M1150 68 1172 51 1212 113 1190 135zM1240 132 1265 103 1275 115 1248 142z",
  "M833 328 838 300 858 298 890 288 905 295 905 308 870 318zM908 280 960 266 1030 250 1105 246 1150 268 1060 272 980 284 912 302z",
  "M860 340 930 325 1000 306 1060 294 1185 286 1245 335 1295 370 1303 420 1305 515 1270 500 1282 488 1275 395 1225 355 1220 335 1180 312 1060 316 1000 330 930 348 900 340 880 363 862 355z",
  "M1323 397 1352 435 1338 450 1342 525 1325 530 1333 490z",
  "M937 405 1000 397 1022 458 962 485zM1012 392 1052 375 1062 368 1110 368 1114 390 1103 430 1130 378 1145 392 1118 470 1070 442 1040 456z",
  "M1148 400 1170 402 1184 422 1195 460 1160 470 1132 448zM1118 482 1190 465 1215 500 1300 545 1225 556 1130 564 1118 545z",
  "M902 470 930 458 967 535 990 580 945 605 905 512zM970 492 1040 485 1060 545 1058 573 1000 580zM1042 466 1068 456 1114 480 1110 520 1072 540z",
  "M770 642 866 592 910 702 820 750zM888 620 915 606 918 618 893 632zM900 650 998 598 1022 655 925 698z",
  "M1123 588 1290 585 1215 812 1200 823 1143 828 1130 680 1150 675 1150 665 1128 660z",
  "M628 760 660 730 768 676 773 690 680 732 634 770zM690 742 778 702 800 752 712 798z",
  "M622 820 680 752 705 815 678 824 660 803 630 828z",
  "M372 650 413 690 433 770 430 905 398 990 333 998 315 1003 218 995 213 980 230 965 190 975 185 955 210 950 150 905 180 865 260 800 290 800 264 745 268 722 345 682z",
  "M455 755 468 740 480 745 488 778 460 783zM452 800 485 792 550 800 590 833 600 822 625 845 560 900 600 955 572 990 502 935 433 970 452 890 445 845zM560 780 575 778 595 805 590 822z",
  "M310 1003 320 1003 340 1068 330 1073zM592 1415 608 1400 657 1443 632 1477 600 1450z",
];

const parcelLanes =
  "M910 292 1060 262 1140 262M930 336 1060 304 1180 298 1240 345 1287 382 1294 505M1052 250 1057 275M985 262 990 282M1060 296 1068 316M1130 290 1128 314M985 312 995 330M1250 340 1235 360M1333 450 1333 520" +
  "M1160 470 1164 560M1118 518 1215 510M1215 500 1218 556M1110 480 1120 520M1028 400 1050 455M1012 418 1030 410M1042 470 1075 540M1060 460 1090 530M970 492 1005 575M998 515 1040 490M1005 550 1060 545M930 560 975 543M938 585 985 570M1105 430 1108 400" +
  "M830 680 855 735M857 664 882 722M905 662 975 635M910 680 985 650M915 690 1000 660M975 612 1000 665M940 630 955 690M695 760 785 720M700 775 790 735M705 787 795 748M745 718 765 775" +
  "M352 684 360 720 353 770 358 850M290 712 298 755M268 745 330 752 433 772M360 715 420 712M400 712 388 850M335 752 325 760M298 760 320 925 300 1000M276 790 310 925M260 800 290 940M230 820 250 870 280 945M300 858 388 840M395 850 430 838M318 925 430 895M325 965 410 948M352 920 370 990M388 905 400 950M355 850 372 905M405 790 410 890M380 885 400 860M190 855 245 870M180 865 230 960M240 915 275 900M235 950 300 935M250 880 265 900" +
  "M498 795 490 845 545 898M460 890 500 935M455 850 480 840 500 860M545 895 615 830M530 900 572 945M530 955 565 930M535 850 550 865M630 752 770 685M695 750 700 790";

function MapCanvas() {
  return (
    <svg viewBox="290 355 3527 1708" preserveAspectRatio="xMaxYMin slice" className="flex-1 min-w-0 bg-[#201c60]" role="img" aria-label="지도">
      <path d="M290 355h3527v1708H290z" fill="#201c60" />
      <g transform="translate(2230 350) scale(1.0121 .5102)">
        <g fill="#000b4b" stroke="#50504e" strokeWidth="4" strokeLinejoin="round">
          <path vectorEffect="non-scaling-stroke" d="M-60-20 245 10 250 35 262 65 272 70 286 105 295 108 296 125 290 150 278 170 265 200 248 232 243 270 230 305 220 350 212 363 205 358 185 358 175 372 155 378 142 398 136 420 136 450 124 498 114 507 100 509 88 498 60 496 57 458 40 425 24 385 22 375 30 368 24 330 15 280 8 235 0 228-60 220z" />
          <path vectorEffect="non-scaling-stroke" d="M245-10 250 35 262 65 272 70 286 105 295 108 296 125 312 170 313 210 316 235 352 285 370 315 381 355 377 390 388 450 405 460 416 419 450 428 466 402 480 392 488 401 510 393 520 380 545 390 578 382 590 352 615 353 624 343 630 315 627 280 625 235 628 215 658 170 686 143 698 90 712 58 723 28 754 10 760-10z" />
          <path vectorEffect="non-scaling-stroke" d="M1302-10 1300 20 1290 40 1280 65 1298 110 1308 155 1303 180 1305 215 1312 228 1309 270 1300 310 1284 340 1288 385 1302 400 1334 405 1358 450 1372 500 1387 515 1396 545 1396 575 1420 587 1442 630 1460 611 1495 591 1510 600 1527 591 1545 598 1560 615 1600 612V-10z" />
        </g>
        <path d="M496 10h55v12l-15 47-5 46 2 20-2 15v58l-28 26-1-70 1-125z" fill="#0ff" />
        <g fill="none" stroke="#50504e" strokeWidth="4" strokeLinejoin="round">
          {borders9.map((d) => <path key={d} d={d} vectorEffect="non-scaling-stroke" />)}
        </g>
      </g>
      <g transform="translate(2230 1150) scale(1.0121 .5868)" fill="none" stroke="#50504e" strokeWidth="4" strokeLinejoin="round">
        {borders11.map((d) => <path key={d} d={d} vectorEffect="non-scaling-stroke" />)}
      </g>
      <path d="m2457 1277 9 2 9-2-3 5h-11zM2627 1289l5-6v5l-4 3z" fill="#fff" />
      <g transform="translate(2480 850) scale(.3827 .3508)" stroke="#00b80e" strokeLinejoin="round" strokeLinecap="round">
        <g fill="#bfff00" strokeWidth="7">
          {parcels.map((d) => <path key={d} d={d} />)}
        </g>
        <path d={parcelLanes} fill="none" strokeWidth="8" />
        <path d="M368 870 400 855 400 885 375 895zM225 890 235 870 240 900z" fill="#201c60" strokeWidth="6" />
        <path d="M372 620 420 670 436 715 445 780 435 850 443 910 415 975" fill="none" stroke="#201c60" strokeWidth="18" />
        <path d="M372 628 420 670 436 715 445 780 435 850 443 910 415 975" fill="none" stroke="#50504e" strokeWidth="10" />
        <path d="M1230 811 1246 806M1310 528v5M142 1060v2M935 375v15M975 390 998 378M1030 372 1045 368" strokeWidth="11" />
      </g>
      <path d="m2319 1046 8-5 6 2-7 6zM2424 1106l15-3 2 2-15 4z" fill="#00b80e" stroke="#00b80e" />
      <path d="M3072 909.500h560v279h-560v-134.500H2935l137-29z" fill="#fff" stroke="#000" strokeWidth="4" />
      <circle cx="2926" cy="1054" r="12" fill="#f00" stroke="#5c1030" strokeWidth="1.500" />
      <g fill="#dcdce6" fillOpacity=".42">
        <path d="M2914 906h30v30h-30zM2914 1160h30v30h-30z" />
      </g>
      <path d="M3605 907h28v29h-28zM3605 1160h28v29h-28z" fill="#e2e2e8" />
    </svg>
  );
}

/* ---------- layer panel ---------- */

const layers = [
  { id: "ud", name: "LSMD", swatch: "bg-[#00ffff] border-[#1c9be8]", active: true },
  { id: "uq", name: "LSMD", swatch: "bg-[#bfff00] border-[#00b80e]" },
  { id: "sect", name: "LARD_", swatch: "bg-[#000b4b] border-[#333]" },
  { id: "sgg", name: "LARD_", swatch: "bg-[#201c60] border-[#333]" },
];

function LayerPanel() {
  return (
    <aside className="w-[290px] shrink-0 flex flex-col bg-[#efefef]">
      <h2 className="h-[64px] pl-[3px] flex items-center text-[38px]">레이어</h2>
      <div className="h-[90px] flex items-center gap-[27px] pl-[13px] border-b-[3px] border-[#bdbdbd]">
        <button type="button" aria-label="Layer styling">
          <svg viewBox="0 0 16 16" className="size-12"><path d="m3 3 6 4-3 7-5-4z" fill="#6b97c9" /><path d="m4 2 6 4-1 3-7-3z" fill="#fce94f" /><path d="m1 9 6 5H3z" fill="#ef2929" /><path d="m6 6 5 3-3 5-5-4zM10 7l4.500-5 1 1-4 5z" fill="#e0a050" stroke="#a5672a" strokeWidth=".5" /></svg>
        </button>
        <button type="button" aria-label="Add group">
          <svg viewBox="0 0 16 16" className="size-12" fill="none" stroke="#8a8a8a"><path d="M5.500 4V2h9v8M3.500 12V5h8v5M1.500 8v6.500h7" /><path d="M8.500 9V2.500a1.500 1.500 0 0 1 2 0V9" stroke="#34567d" /><rect x="10" y="10" width="6" height="6" rx="1" fill="#4f8f55" stroke="none" /><path d="M13 11v4M11 13h4" stroke="#fff" /></svg>
        </button>
        <button type="button" aria-label="Manage map themes">
          <svg viewBox="0 0 16 16" className="size-12"><path d="M1 7.500c3-5 11-5 14 0-3 5-11 5-14 0zM1 4c4-3 9-3 13 0" fill="#fff" stroke="#888" /><circle cx="8" cy="7.200" r="3.400" fill="#7da7d9" stroke="#4a77a8" /><circle cx="8" cy="6.700" r="1.300" /><path d="M11.500 13h4.500l-2.200 3z" fill="#555" /></svg>
        </button>
        <button type="button" aria-label="Filter legend">
          <svg viewBox="0 0 16 16" className="size-12"><path d="M1 .500h13v3H1z" fill="#fce94f" stroke="#c4a000" /><path d="M1.500 4h12L9 9v6l-2.500-1V9z" fill="#6b97c9" stroke="#34567d" strokeWidth=".8" /><path d="M11.500 13h4.500l-2.200 3z" fill="#555" /></svg>
        </button>
      </div>
      <ul className="flex-1 bg-white font-['Open_Sans','Noto_Sans_CJK_KR',sans-serif]">
        {layers.map((l) => (
          <li key={l.id} className={clsx("h-[54px] flex items-center pl-[62px]", l.active && "bg-[#f0f0f0]")}>
            <Check id={`layer-${l.id}`} label={l.name} checked bare />
            <span className={clsx("ml-[17px] size-12 shrink-0 border-2", l.swatch)}>
              {l.active && (
                <svg viewBox="0 0 24 24" className="w-full h-full"><Pencil color="#d8c956" /></svg>
              )}
            </span>
            <span className={clsx("ml-[18px] text-[36px] leading-[50px] font-semibold whitespace-nowrap", l.active && "underline underline-offset-4")}>{l.name}</span>
          </li>
        ))}
      </ul>
      <div className="h-[42px] shrink-0 flex border-y-[3px] border-[#b5b5b5]">
        <button type="button" aria-label="Scroll left" className="w-8 shrink-0 flex items-center justify-center border-r-2 border-[#b5b5b5]">
          <span className="border-y-[9px] border-r-[10px] border-y-transparent border-r-[#444]" />
        </button>
        <div className="w-[123px] shrink-0 bg-[#fafafa] border-r-2 border-[#b5b5b5]" />
        <div className="flex-1 bg-[#dcdcdc]" />
      </div>
    </aside>
  );
}

/* ---------- annotation dialog ---------- */

const margins = ["상단", "왼쪽", "우측", "하단"];
const actions = ["확인", "취소", "삭제", "적용", "도움말"];

function ArrowButton({ label, className }: { label: string; className?: string }) {
  return (
    <button type="button" aria-label={label} className={clsx("w-9 shrink-0 flex items-center justify-center", control, raised, className)}>
      <Down />
    </button>
  );
}

function AnnotationDialog() {
  return (
    <section role="dialog" aria-labelledby="annotation-title" className="absolute left-[287px] top-[346px] w-[1938px] bg-[#f0f0f0] rounded-[20px] overflow-hidden text-[38px] leading-[42px] font-light shadow-[0_0_0_3px_rgba(90,90,90,0.45),0_32px_100px_rgba(0,0,0,0.5)]">
      <header className="h-[83px] flex items-center pl-[19px] pr-[38px] pb-1 bg-[#f1f4f3] font-normal">
        <QgisLogo />
        <h1 id="annotation-title" className="ml-[5px]">주석 텍스트</h1>
        <button type="button" aria-label="닫기" className="ml-auto">
          <svg viewBox="0 0 22 22" className="size-[22px]"><path d="m1 1 20 20M21 1 1 21" stroke="#111" strokeWidth="2" /></svg>
        </button>
      </header>
      <form className="px-[33px] pt-[33px] pb-8" onSubmit={(e) => e.preventDefault()}>
        <div className="flex items-center">
          <div className={clsx("relative w-[674px] h-[66px] bg-white overflow-hidden", control)}>
            <select aria-label="글꼴" className="appearance-none w-full h-full pl-2.5 shadow-[inset_0_3px_0_#ececec]">
              <option>나눔고딕</option>
            </select>
            <span className={clsx("absolute right-0 inset-y-0 w-[60px] pr-1 border-l-[3px] border-[#a9a9a9] flex items-center justify-center pointer-events-none", raised)}><Down /></span>
          </div>
          <Spin id="size" label="글꼴 크기" value="9" clear className="ml-auto w-[212px] h-[60px] text-[36px]" />
          <button type="button" aria-pressed="true" className={clsx("ml-[18px] w-60 h-[60px] bg-[#dcdcdc] text-[36px]", control)}>B</button>
          <button type="button" className={clsx("ml-[18px] w-60 h-[60px] text-[36px]", control, raised)}>I</button>
          <button type="button" aria-label="글꼴 색" className={clsx("ml-[18px] w-[264px] h-[66px] px-3 py-1.5", control, raised)}>
            <span className="block h-12 rounded-[10px] bg-[#00b80e]" />
          </button>
          <ArrowButton label="색 메뉴" className="h-[66px]" />
        </div>
        <textarea aria-label="텍스트" defaultValue="안양시 벤처기업육성촉진지구" className="block mt-[18px] w-full h-[347px] resize-none bg-white border-[3px] border-[#c4c4c4] px-3 py-2.5 text-[36px] leading-[48px] font-bold text-[#00b80e]" />

        <div className="mt-[52px] ml-[27px]"><Check id="fixed" label="고정된 지도 위치" checked /></div>

        <div className="mt-6 ml-[29px] mr-[27px] grid grid-cols-[244px_1fr] gap-y-[18px] items-center">
          <label htmlFor="linked">연결된 레이어</label>
          <div className={clsx("relative h-[72px]", control, raised)}>
            <select id="linked" className="appearance-none w-full h-full" />
            <span className="absolute right-5 top-1/2 -translate-y-1/2 pointer-events-none"><Down /></span>
          </div>
          <span>지도 마커</span>
          <div className="flex h-[225px]">
            <button type="button" aria-label="지도 마커" className={clsx("w-[300px] flex items-center justify-center", control, raised)}>
              <svg viewBox="0 0 54 54" className="size-[54px]"><path d="m27 2 25 25-25 25L2 27z" fill="#54b04a" stroke="#3d8033" strokeWidth="3" strokeLinejoin="round" /></svg>
            </button>
            <ArrowButton label="마커 메뉴" />
          </div>
          <span>프레임 스타일</span>
          <div className="flex h-[74px]">
            <button type="button" aria-label="프레임 스타일" className={clsx("flex-1 px-3 py-1.5", control, raised)}>
              <span className="block h-[56px] bg-white border-2 border-black" />
            </button>
            <ArrowButton label="프레임 메뉴" />
          </div>
        </div>

        <fieldset className="ml-[29px] mr-[27px]">
          <legend className="h-[74px] flex items-center pl-[5px] pt-3">
            <button type="button" className="flex items-center gap-[28px]">
              <svg viewBox="0 0 32 22" className="w-8 h-[22px]"><path d="M1 1h30L16 21z" fill="#444" stroke="#111" strokeWidth="2" /></svg>
              콘텐츠 여백
            </button>
          </legend>
          <div className="border-[3px] border-[#d7d7d7] bg-[#ececec] pt-[26px] pb-[35px] pl-8 pr-[33px] grid grid-cols-[89px_1fr] gap-y-6 items-center">
            {margins.map((m, i) => (
              <div key={m} className="contents">
                <label htmlFor={`margin-${i}`}>{m}</label>
                <Spin id={`margin-${i}`} label={m} value="0.00 mm" atMin className="h-[57px]" />
              </div>
            ))}
          </div>
        </fieldset>

        <div className="mt-[52px] text-[36px]"><Check id="live" label="Live update" /></div>
        <div className="mt-6 flex justify-end gap-[18px]">
          {actions.map((a, i) => (
            <button key={a} type="button" className={clsx("w-60 h-[60px] text-[38px]", i === 0 ? "rounded-[8px] border-[3px] border-[#3daeff] bg-linear-to-b from-white to-[#e1e7ed]" : [control, raised])}>{a}</button>
          ))}
        </div>
      </form>
    </section>
  );
}

/* ---------- window ---------- */

const menus = [["프로젝트", "J"], ["편집", "E"], ["보기", "V"], ["레이어", "L"], ["설정", "S"], ["플러그인", "P"], ["벡터", "O"], ["래스터", "R"], ["데이터베이스", "D"], ["웹", "W"], ["메시", "M"], ["공간 처리", "C"], ["도움말", "H"]];

function StatusBar() {
  return (
    <footer className="h-[85px] shrink-0 flex items-center border-t-[3px] border-[#bdbdbd] bg-[#f0f0f0] pr-[9px] text-[34px] font-light whitespace-nowrap">
      <div className={clsx("w-[1068px] h-[66px] flex items-center bg-white pl-6", control)}>
        <svg viewBox="0 0 40 40" className="size-10 shrink-0" fill="none" stroke="#777"><circle cx="15" cy="15" r="12" strokeWidth="3" /><path d="m24 24 13 13" strokeWidth="4" /></svg>
        <input aria-label="위치 찾기" placeholder="위치를 찾으려면 입력하세요 (Ctrl+K)" className="ml-5 flex-1 min-w-0 text-[38px] placeholder:text-[#777]" />
      </div>
      <label htmlFor="coord" className="ml-auto">좌표</label>
      <input id="coord" defaultValue="432712, 203193" className={clsx("ml-2 w-[298px] h-[66px] bg-[#f4f4f4] text-center", control)} />
      <button type="button" aria-label="Toggle extents" className="ml-3">
        <svg viewBox="0 0 48 52" className="w-12 h-13"><ellipse cx="30" cy="37" rx="14" ry="14" fill="#b3a3a3" /><ellipse cx="24" cy="36" rx="12" ry="12" fill="#eee" stroke="#000" strokeWidth="4" /><ellipse cx="16" cy="16" rx="11" ry="15" transform="rotate(-20 16 16)" fill="#fff" stroke="#000" strokeWidth="5" /><path d="m14 5 6 18M7 25l18 3" stroke="#000" strokeWidth="5" /><circle cx="26" cy="38" r="4" fill="#fff" stroke="#000" strokeWidth="3" /><path d="M30 12h3M36 8h3M41 4h3M2 34h3M6 40h3" stroke="#000" strokeWidth="3" /></svg>
      </button>
      <label htmlFor="scale" className="ml-[37px]">축척</label>
      <div className={clsx("relative ml-2 w-[264px] h-[66px] bg-white overflow-hidden", control)}>
        <select id="scale" className="appearance-none w-full h-full pl-3 shadow-[inset_0_3px_0_#ececec]"><option>1:107059</option></select>
        <span className={clsx("absolute right-0 inset-y-0 w-[60px] border-l-[3px] border-[#a9a9a9] flex items-center justify-center pointer-events-none", raised)}><Down /></span>
      </div>
      <button type="button" aria-label="Lock scale" className="ml-[36px]">
        <svg viewBox="0 0 38 46" className="w-[38px] h-[46px]"><path d="M8 24V13a11 11 0 0 1 22 0v11" fill="none" stroke="#888" strokeWidth="5" /><rect y="21" width="38" height="25" rx="4" fill="#666" /></svg>
      </button>
      <label htmlFor="magnifier" className="ml-7">확대경</label>
      <Spin id="magnifier" label="확대경" value="100%" className="ml-2.5 w-[266px] h-[60px]" />
      <label htmlFor="rotation" className="ml-7">회전</label>
      <Spin id="rotation" label="회전" value="0.0 °" className="ml-[29px] w-[266px] h-[60px]" />
      <div className="ml-[18px]"><Check id="render" label="렌더링" checked /></div>
      <button type="button" className="ml-11 flex items-center gap-1.5">
        <svg viewBox="0 0 48 44" className="w-12 h-11" fill="none" stroke="#666" strokeWidth="3"><path d="M14 4h20l10 20H4z" fill="#666" /><path d="M10 16h28M20 4l-4 20M28 4l4 20" stroke="#eee" /><path d="M6 24a18 18 0 0 0 36 0M24 24v18M14 24c0 8 4 14 10 18 6-4 10-10 10-18M9 33h30" /></svg>
        EPSG:5181
      </button>
      <button type="button" aria-label="Messages" className="ml-[78px]">
        <svg viewBox="0 0 48 46" className="w-12 h-[46px]"><path d="M24 1c14 0 23 8 23 18 0 8-5 13-9 15 0 4 2 8 5 10-7 0-12-4-14-8C12 38 1 30 1 19 1 9 10 1 24 1z" fill="#666" /><circle cx="13" cy="19" r="4" fill="#fff" /><circle cx="24" cy="19" r="4" fill="#fff" /><circle cx="35" cy="19" r="4" fill="#fff" /></svg>
      </button>
    </footer>
  );
}

export default function App() {
  return (
    <div className="relative h-screen flex flex-col overflow-hidden bg-[#f0f0f0] text-black font-['Liberation_Sans','Noto_Sans_CJK_KR',sans-serif]">
      <header className="h-[55px] shrink-0 flex items-center bg-[#f3f3f3] pr-[49px] text-[36px] leading-[44px] text-[#929292] font-['Noto_Sans_CJK_KR',sans-serif]">
        <div className="flex items-center h-full w-[38px] justify-end overflow-hidden pb-3"><QgisLogo /></div>
        <span className="ml-1.5 pb-2.5">*qgis 연습 — QGIS</span>
        <div className="ml-auto flex items-center gap-[116px] pb-3.5">
          <button type="button" aria-label="최소화"><svg viewBox="0 0 22 22" className="size-[22px]"><path d="M1 11h20" stroke="#888" strokeWidth="2" /></svg></button>
          <button type="button" aria-label="이전 크기로"><svg viewBox="0 0 22 22" className="size-[22px]" fill="none" stroke="#888" strokeWidth="2"><rect x="1" y="5" width="15" height="15" rx="3" /><path d="M5 2h11q4 0 4 4v11" /></svg></button>
          <button type="button" aria-label="닫기"><svg viewBox="0 0 22 22" className="size-[22px]"><path d="m1 1 20 20M21 1 1 21" stroke="#888" strokeWidth="2" /></svg></button>
        </div>
      </header>
      <nav className="h-[62px] shrink-0 flex items-center gap-[45px] pl-[19px] pb-1 border-b-[3px] border-[#d9d9d9] text-[38px] leading-[50px] text-[#999] font-['Noto_Sans_CJK_KR',sans-serif]">
        {menus.map(([name, key]) => (
          <button key={name} type="button" className="whitespace-nowrap">{name} (<u>{key}</u>)</button>
        ))}
      </nav>
      <ProjectToolbar />
      <LayerToolbar />
      <main className="flex-1 min-h-0 flex">
        <LayerPanel />
        <div className="flex-1 min-w-0 flex border-t-[3px] border-[#c6c6c6]"><MapCanvas /></div>
      </main>
      <StatusBar />
      <AnnotationDialog />
    </div>
  );
}
